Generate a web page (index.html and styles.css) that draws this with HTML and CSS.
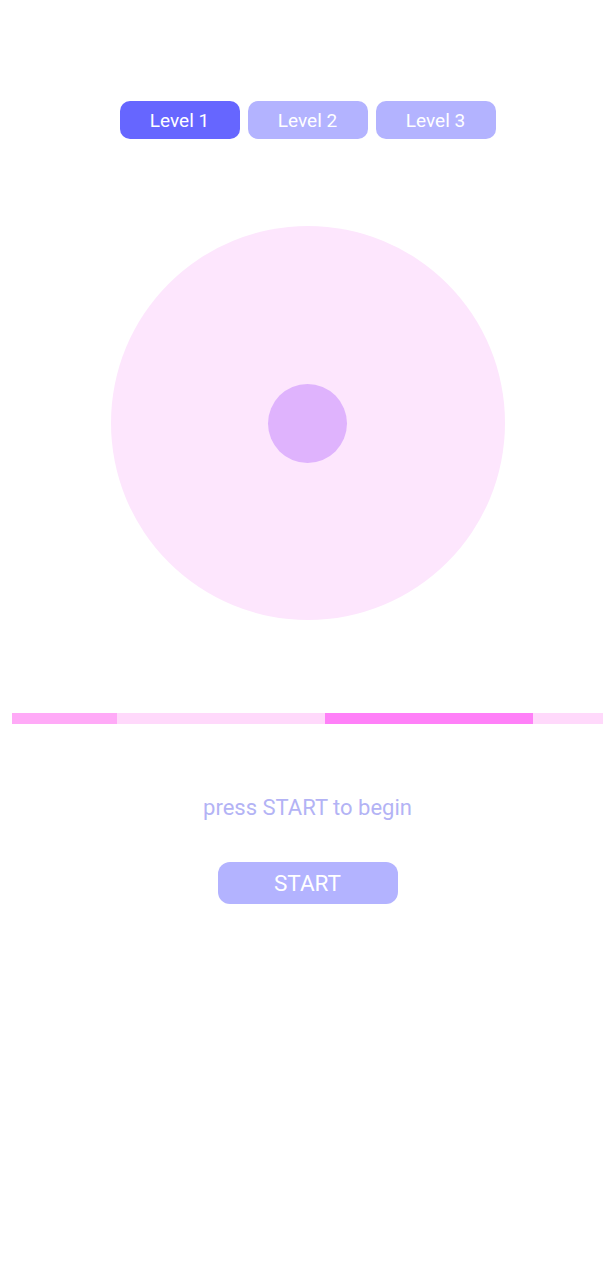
FILE: index.html
```html
<html>
<head>
    <title>Focus Trainer</title>
    <link rel="stylesheet" href="styles.css">
</head>
<body>
    <div class="levels">
        <button class="level-button active">Level 1</button>
        <button class="level-button">Level 2</button>
        <button class="level-button">Level 3</button>
    </div>

    <div class="target">
        <div class="dot"></div>
    </div>

    <div class="track">
        <div class="segment light" style="width: 105px"></div>
        <div class="segment pale" style="width: 208px"></div>
        <div class="segment strong" style="width: 208px"></div>
        <div class="segment pale" style="width: 70px"></div>
    </div>

    <div class="hint">press START to begin</div>

    <button class="start-button">START</button>
</body>
</html>
```

FILE: styles.css
```css
body {
    margin: 0;
    background-color: #ffffff;
    font-family: Roboto, "Noto Sans", sans-serif;
    display: flex;
    flex-direction: column;
    align-items: center;
    min-height: 100vh;
}

.levels {
    display: flex;
    gap: 8px;
    margin-top: 101px;
}

.level-button {
    width: 120px;
    height: 38px;
    border: none;
    border-radius: 10px;
    background-color: #b3b3ff;
    color: #ffffff;
    font-family: Roboto, sans-serif;
    font-size: 19px;
    padding: 0;
}

.level-button.active {
    background-color: #6666ff;
}

.target {
    width: 394px;
    height: 394px;
    margin-top: 87px;
    border-radius: 50%;
    background-color: #fde6fd;
    display: flex;
    align-items: center;
    justify-content: center;
}

.dot {
    width: 79px;
    height: 79px;
    border-radius: 50%;
    background-color: #dfb3fd;
}

.track {
    display: flex;
    width: 591px;
    height: 11px;
    margin-top: 93px;
}

.segment {
    height: 100%;
}

.segment.light {
    background-color: #ffaaf7;
}

.segment.pale {
    background-color: #ffd9fb;
}

.segment.strong {
    background-color: #ff80f8;
}

.hint {
    margin-top: 72px;
    color: #b3b3f5;
    font-size: 22px;
    line-height: 24px;
}

.start-button {
    width: 180px;
    height: 42px;
    margin-top: 42px;
    border: none;
    border-radius: 12px;
    background-color: #b3b3ff;
    color: #ffffff;
    font-family: Roboto, sans-serif;
    font-size: 22.5px;
    padding: 0;
}
```
